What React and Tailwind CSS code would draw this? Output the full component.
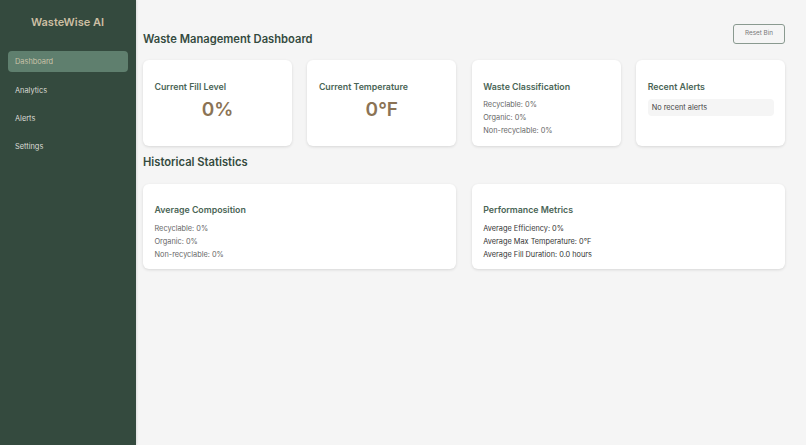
import React from 'react';

function Card({ title, children }) {
  return (
    <div className="bg-white rounded-md shadow-[0_1px_3px_rgba(0,0,0,0.12)] px-[11.5px] pt-[20.5px] pb-[8.5px]">
      <h3 className="text-[8.8px] font-semibold leading-3 text-[#4a6556] mb-[5.5px]">{title}</h3>
      {children}
    </div>
  );
}

function Line({ children, dark }) {
  return <p className={"text-[7.35px] leading-[13px] " + (dark ? "text-[#333]" : "text-[#666]")}>{children}</p>;
}

function BigValue({ children }) {
  return <p className="text-[19px] font-semibold leading-6 text-center text-[#8b7355] mt-[3px]">{children}</p>;
}

export default function App() {
  return (
    <div className="flex h-[445px] bg-[#f5f5f5] font-['Inter',sans-serif]">
      <aside className="w-[136px] shrink-0 bg-[#344a3e] px-2 shadow-[1px_0_2px_rgba(0,0,0,0.1)]">
        <h1 className="text-[11px] font-semibold leading-4 text-[#cdbfa3] text-center pt-3.5 mb-[21px] -ml-px">WasteWise AI</h1>
        <nav className="flex flex-col gap-[7.4px] text-[7.4px] text-[#dcdcd6]">
          <a className="h-[21px] flex items-center rounded bg-[#5f7f6e] px-[7px] text-[#c9c2a8]">Dashboard</a>
          <a className="h-[21px] flex items-center px-[7px] pt-px">Analytics</a>
          <a className="h-[21px] flex items-center px-[7px] pt-px">Alerts</a>
          <a className="h-[21px] flex items-center px-[7px]">Settings</a>
        </nav>
      </aside>
      <main className="flex-1 pl-[7px] pr-[21px] pt-6">
        <div className="flex items-center justify-between h-5 mb-4">
          <h2 className="text-[11.2px] font-semibold text-[#344a3e] mt-[10px]">Waste Management Dashboard</h2>
          <button className="border border-[#8a9a90] rounded-[3px] text-[6.3px] text-[#777] w-[52px] h-5">Reset Bin</button>
        </div>
        <div className="grid grid-cols-4 gap-[15.5px]">
          <Card title="Current Fill Level"><BigValue>0%</BigValue></Card>
          <Card title="Current Temperature"><BigValue>0°F</BigValue></Card>
          <Card title="Waste Classification">
            <Line>Recyclable: 0%</Line>
            <Line>Organic: 0%</Line>
            <Line>Non-recyclable: 0%</Line>
          </Card>
          <Card title="Recent Alerts">
            <div className="bg-[#f5f5f5] rounded-sm text-[7.35px] leading-[17px] h-[17px] px-1 text-[#444] mt-[6.5px]">No recent alerts</div>
          </Card>
        </div>
        <h2 className="text-[11.2px] font-semibold leading-4 text-[#344a3e] mt-[8.5px] mb-[13.5px]">Historical Statistics</h2>
        <div className="grid grid-cols-2 gap-[15.5px]">
          <Card title="Average Composition">
            <Line>Recyclable: 0%</Line>
            <Line>Organic: 0%</Line>
            <Line>Non-recyclable: 0%</Line>
          </Card>
          <Card title="Performance Metrics">
            <Line dark>Average Efficiency: 0%</Line>
            <Line dark>Average Max Temperature: 0°F</Line>
            <Line dark>Average Fill Duration: 0.0 hours</Line>
          </Card>
        </div>
      </main>
    </div>
  );
}
